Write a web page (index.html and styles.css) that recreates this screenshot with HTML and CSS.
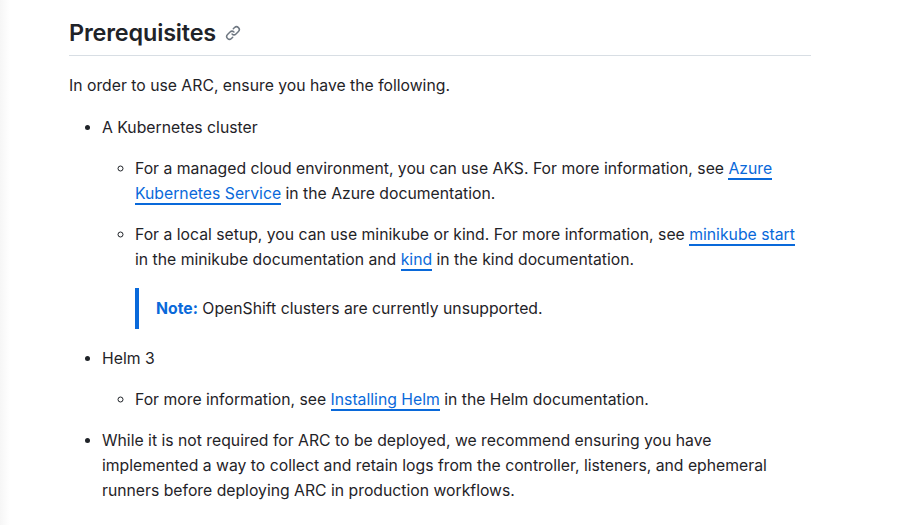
FILE: index.html
```html
<!DOCTYPE html>
<html lang="en">
<head>
<meta charset="utf-8">
<title>Prerequisites</title>
<link rel="stylesheet" href="styles.css">
</head>
<body>
<main class="content">
  <h2 class="heading">Prerequisites
    <svg class="anchor" width="16" height="16" viewBox="0 0 16 16" fill="#6e7781"><path d="m7.775 3.275 1.25-1.25a3.5 3.5 0 1 1 4.95 4.95l-2.5 2.5a3.5 3.5 0 0 1-4.95 0 .751.751 0 0 1 .018-1.042.751.751 0 0 1 1.042-.018 1.998 1.998 0 0 0 2.83 0l2.5-2.5a2.002 2.002 0 0 0-2.83-2.83l-1.25 1.25a.751.751 0 0 1-1.042-.018.751.751 0 0 1-.018-1.042Zm-4.69 9.64a1.998 1.998 0 0 0 2.83 0l1.25-1.25a.751.751 0 0 1 1.042.018.751.751 0 0 1 .018 1.042l-1.25 1.25a3.5 3.5 0 1 1-4.95-4.95l2.5-2.5a3.5 3.5 0 0 1 4.95 0 .751.751 0 0 1-.018 1.042.751.751 0 0 1-1.042.018 1.998 1.998 0 0 0-2.83 0l-2.5 2.5a1.998 1.998 0 0 0 0 2.83Z"/></svg>
  </h2>
  <p class="intro">In order to use ARC, ensure you have the following.</p>
  <ul class="outer">
    <li>
      <p>A Kubernetes cluster</p>
      <ul class="inner">
        <li><p>For a managed cloud environment, you can use AKS. For more information, see <a href="#">Azure Kubernetes Service</a> in the Azure documentation.</p></li>
        <li>
          <p>For a local setup, you can use minikube or kind. For more information, see <a href="#">minikube start</a> in the minikube documentation and <a href="#">kind</a> in the kind documentation.</p>
          <blockquote class="note"><strong>Note:</strong> OpenShift clusters are currently unsupported.</blockquote>
        </li>
      </ul>
    </li>
    <li>
      <p>Helm 3</p>
      <ul class="inner">
        <li><p>For more information, see <a href="#">Installing Helm</a> in the Helm documentation.</p></li>
      </ul>
    </li>
    <li><p>While it is not required for ARC to be deployed, we recommend ensuring you have implemented a way to collect and retain logs from the controller, listeners, and ephemeral runners before deploying ARC in production workflows.</p></li>
  </ul>
</main>
</body>
</html>
```
FILE: styles.css
```css
html, body { margin: 0; padding: 0; overflow: hidden; height: 525px; }
body { background: linear-gradient(90deg, #f6f6f6, #fff 10px); font-family: "Inter", "Liberation Sans", sans-serif; color: #1f2328; font-size: 15.75px; line-height: 25px; }
.content { width: 742px; margin-left: 69px; }
.heading { margin: 0; padding-top: 16px; padding-bottom: 5px; font-size: 23.4px; letter-spacing: -0.15px; line-height: 34px; font-weight: 600; border-bottom: 1px solid #d8dee4; display: flex; align-items: center; gap: 9px; }
.anchor { display: block; }
p { margin: 0; }
.intro { margin-top: 17px; }
.outer { margin: 17px 0 0; padding: 0 10px 0 33px; list-style: disc; }
.outer > li + li { margin-top: 16.6px; }
.inner { margin: 16px 0 0; padding: 0 0 0 33px; list-style: circle; }
.inner > li + li { margin-top: 16px; }
a { color: #0969da; text-decoration: none; border-bottom: 2px solid #0969da; }
.note { margin: 16px 0 0; padding: 8px 0 8px 17px; border-left: 4px solid #0969da; line-height: 25px; }
.note strong { color: #0969da; }
```
